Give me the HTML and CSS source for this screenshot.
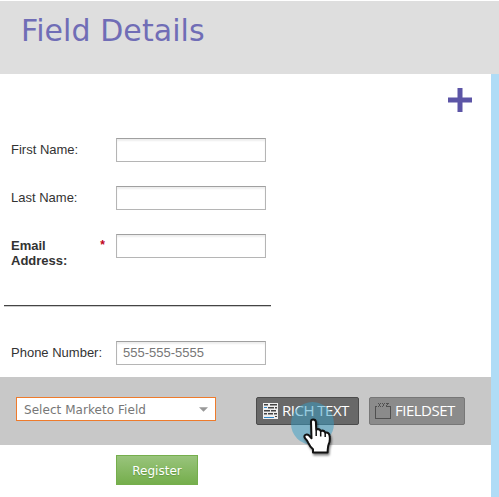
FILE: index.html
```html
<!DOCTYPE html>
<html lang="en">
<head>
<meta charset="utf-8">
<title>Field Details</title>
<link rel="stylesheet" href="styles.css">
</head>
<body>
<header class="header"><h1 class="title">Field Details</h1></header>
<div class="body">
  <main class="main">
    <div class="tools">
      <svg class="plus" width="24" height="24" viewBox="0 0 24 24"><path d="M12 0v24M0 12h24"/></svg>
    </div>
    <form class="form">
      <div class="row"><label class="label" for="first">First Name:</label><input class="input" id="first"></div>
      <div class="row"><label class="label" for="last">Last Name:</label><input class="input" id="last"></div>
      <div class="row"><label class="label required" for="email"><span>Email<br>Address:</span><span class="star">*</span></label><input class="input" id="email"></div>
      <hr class="rule">
      <div class="row phone"><label class="label" for="phone">Phone Number:</label><input class="input" id="phone" placeholder="555-555-5555"></div>
    </form>
    <div class="bar">
      <div class="select"><span class="select-text">Select Marketo Field</span><svg width="9" height="5" viewBox="0 0 10 5"><path d="M0 0h10L5 5z" fill="#999"/></svg></div>
      <button class="button rich" type="button">
        <svg class="icon" width="16" height="16" viewBox="0 0 16 16" shape-rendering="crispEdges">
          <path d="M0 0h15v16H0z" fill="#eee"/>
          <path d="M1 1h4v1H1zM7 1h7v1H7zM5 4h6v1H5zM12 4h2v1h-2zM1 7h6v1H1zM8 7h5v1H8zM1 10h3v1H1zM5 10h5v1H5zM11 10h3v1h-3zM12 13h2v1h-2z" fill="#444"/>
          <path d="M1 2h4v1H1zM7 2h7v1H7zM5 5h6v1H5zM12 5h2v1h-2zM1 8h6v1H1zM8 8h5v1H8zM1 11h3v1H1zM5 11h5v1H5zM11 11h3v1h-3z" fill="#999"/>
          <path d="M1 4h3v1H1zM1 14h10v1H1z" fill="#2e86c8"/>
        </svg>
        <span class="button-text rich-text">RICH TEXT</span>
        <span class="pulse"></span>
        <svg class="hand" width="34" height="42" viewBox="0 0 34 42">
          <path d="M10 3.8Q10 1.5 12.2 1.5Q14.7 1.5 14.9 4L15.2 11.5Q18.2 10.3 19.7 13Q22.6 11.8 24.2 14.6Q28.4 14 28.6 18.2Q29.4 23 27.6 26.5Q26.8 28.5 26.6 34.5H12V31.2Q9 28.7 7.3 24.8Q6.4 22.6 4.2 20.4Q2.6 18.2 4.2 17Q6.1 15.8 8.1 17.6L10.5 20.2Z"/>
          <path d="M15.2 12v6M19.7 13.5v5M24.2 15v4" class="hand-lines"/>
        </svg>
      </button>
      <button class="button fieldset" type="button">
        <svg class="icon" width="16" height="16" viewBox="0 0 16 16" fill="none" stroke="#505050" shape-rendering="crispEdges">
          <path d="M2 3.5H.5v12h15v-12H14"/>
          <path d="M3 .5h1M5 .5h1M4 1.5h1M4 2.5h1M3 3.5h1M5 3.5h1M7 .5h1M9 .5h1M8 1.5h1M8 2.5h1M7 3.5h1M11 .5h3M12 1.5h1M11 2.5h1M11 3.5h3"/>
        </svg>
        <span class="button-text field-text">FIELDSET</span>
      </button>
    </div>
    <button class="register" type="button">Register</button>
  </main>
  <aside class="edge"></aside>
</div>
</body>
</html>
```

FILE: styles.css
```css
* { box-sizing: border-box; }
body { margin: 0; height: 497px; overflow: hidden; background: #fff; font-family: "Liberation Sans", Arial, sans-serif; }
.header { height: 74px; border-top: 1px solid #fff; background: #dedede; padding: 11px 0 0 21px; }
.title { margin: 0; font: 400 30px/37px "DejaVu Sans", Verdana, sans-serif; color: #706db6; letter-spacing: .07px; white-space: nowrap; }
.body { display: flex; height: 423px; }
.main { width: 491px; }
.edge { flex: 1; background: #b0dcf6; }
.tools { display: flex; justify-content: flex-end; height: 64px; padding: 14px 19px 0 0; }
.plus { stroke: #5c55a6; stroke-width: 5; }
.form { height: 239px; }
.row { display: flex; height: 48px; padding-left: 11px; }
.label { width: 105px; padding-top: 4px; font-size: 13px; line-height: 15px; color: #333; letter-spacing: 0; white-space: nowrap; }
.required { display: flex; justify-content: space-between; padding-right: 11px; font-weight: 700; }
.star { color: #c00020; font-size: 12px; }
.input { width: 150px; height: 24px; border: 1px solid #b5b5b5; border-top-color: #a0a0a0; border-radius: 0; padding: 0 6px 1px; background: #fff; box-shadow: inset 0 2px 2px #eee; font: 13px "Liberation Sans", Arial, sans-serif; color: #777; outline: 0; }
.input::placeholder { color: #777; opacity: 1; }
.rule { width: 267px; height: 2px; margin: 23px 0 0 4px; border: 0; border-top: 1px solid #444; background: #ccc; }
.phone { margin-top: 34px; }
.bar { display: flex; align-items: flex-start; height: 68px; padding: 20px 0 0 16px; background: #c8c8c8; }
.select { display: flex; align-items: center; justify-content: space-between; width: 200px; height: 24px; border: 1px solid #ee7b2c; padding: 0 7px; background: #fff; font: 12px "DejaVu Sans", Verdana, sans-serif; color: #777; }
.select-text { padding-top: 2px; letter-spacing: .05px; white-space: nowrap; }
.button { position: relative; display: flex; align-items: center; height: 28px; border: 1px solid #4c4c4c; border-radius: 2px; background: #686868; padding: 0 0 0 6px; color: #fff; font: 15px/20px "Open Sans", "Noto Sans", sans-serif; }
.icon { flex: none; }
.rich { width: 103px; margin-left: 40px; }
.fieldset { width: 96px; margin-left: 10px; padding-left: 5px; background: #8b8b8b; border-color: #777; }
.button-text { margin-left: 3px; padding-bottom: 2px; white-space: nowrap; }
.rich-text { letter-spacing: -.5px; }
.field-text { margin-left: 4px; letter-spacing: -.5px; }
.pulse { position: absolute; left: 34px; top: 4px; width: 43px; height: 43px; border-radius: 50%; background: rgba(54, 157, 198, .5); }
.hand { position: absolute; left: 44px; top: 20px; overflow: visible; fill: #fff; stroke: #111; stroke-width: 2; stroke-linejoin: round; filter: drop-shadow(1px 2px 1px rgba(0, 0, 0, .5)); }
.hand-lines { fill: none; stroke-width: 1.5; }
.register { display: block; width: 82px; height: 30px; margin: 10px 0 0 116px; padding: 2px 0 0; border: 1px solid #75ae4c; background: linear-gradient(#99c47c, #75ae4c); color: #fff; font: 12px "DejaVu Sans", Verdana, sans-serif; text-shadow: 0 1px 1px #639742; }
```
